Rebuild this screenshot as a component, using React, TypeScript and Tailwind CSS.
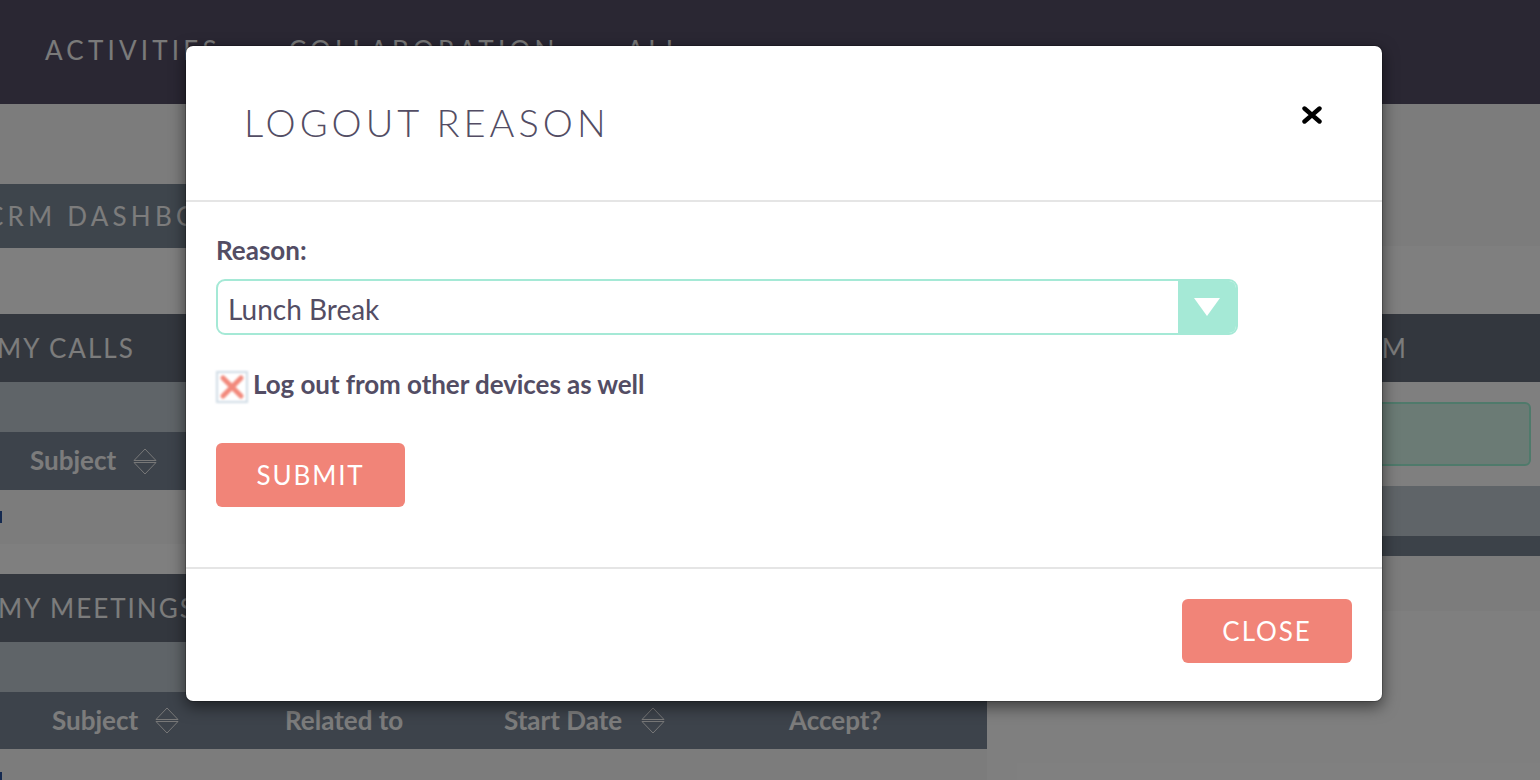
function SortIcon() {
  return (
    <svg width="24" height="27" viewBox="0 0 24 27" fill="none" stroke="#f0f0f0" strokeWidth="1" className="shrink-0">
      <path d="M12 1 L23 12.5 L1 12.5 Z" />
      <path d="M1 14.5 L23 14.5 L12 26 Z" />
    </svg>
  );
}

function SectionBar({ label, className }: { label: string; className: string }) {
  return (
    <div className={`flex items-center whitespace-nowrap text-[26px] text-[#f8f8f8] ${className}`}>
      {label}
    </div>
  );
}

export default function App() {
  return (
    <div className="relative flex h-[780px] flex-col overflow-hidden bg-white font-[Lato,sans-serif]">
      {/* page behind the dialog */}
      <nav className="flex h-[104px] shrink-0 gap-[68px] bg-[#544e66] pl-[45px] pt-[31px] text-[26px] leading-[38px] tracking-[4.2px] text-[#f5f5f5]">
        <span>ACTIVITIES</span>
        <span>COLLABORATION</span>
        <span>ALL</span>
      </nav>

      <div className="flex flex-1">
        <div className="flex w-[987px] shrink-0 flex-col">
          <div className="h-[80px] bg-[#f8f8f8]" />
          <SectionBar label="CRM DASHBOARD" className="h-[64px] w-[800px] bg-[#7c8a98] -indent-[14px] tracking-[4.2px]" />
          <div className="h-[66px]" />
          <SectionBar label="MY CALLS" className="h-[68px] bg-[#666e7c] -indent-[3px] tracking-[2px]" />
          <div className="h-[50px] bg-[#bec8d0]" />
          <div className="flex h-[58px] items-center gap-[17px] bg-[#7a8696] pl-[30px] text-[26px] font-bold text-[#f8f8f8]">
            <span className="-mt-[2px]">Subject</span>
            <SortIcon />
          </div>
          <div className="flex h-[54px] items-center bg-[#f8f8f8]">
            <span className="h-[12px] w-[2px] bg-[#2a55a0]" />
          </div>
          <div className="h-[30px]" />
          <SectionBar label="MY MEETINGS" className="h-[68px] bg-[#666e7c] -indent-[2px] tracking-[2px]" />
          <div className="h-[50px] bg-[#bec8d0]" />
          <div className="flex h-[57px] items-center bg-[#7a8696] text-[26px] font-bold text-[#f8f8f8]">
            <div className="flex w-[285px] items-center gap-[17px] pl-[52px]">
              <span>Subject</span>
              <SortIcon />
            </div>
            <div className="w-[219px]">Related to</div>
            <div className="flex w-[285px] items-center gap-[19px]">
              <span>Start Date</span>
              <SortIcon />
            </div>
            <div>Accept?</div>
          </div>
          <div className="flex-1 bg-[#f8f8f8] pt-[23px]">
            <div className="h-[8px] w-[2px] bg-[#2a55a0]" />
          </div>
        </div>

        <div className="ml-[18px] flex flex-1 flex-col">
          <div className="h-[142px] bg-[#f8f8f8]" />
          <div className="h-[68px]" />
          <SectionBar label="FORM" className="h-[68px] justify-end bg-[#666e7c] pr-[132px] tracking-[2px]" />
          <div className="h-[104px] pr-[9px] pt-[20px]">
            <div className="h-[64px] rounded-[6px] border-2 border-[#9ef4d6] bg-[#d6f6ea]" />
          </div>
          <div className="h-[50px] bg-[#bec8d0]" />
          <div className="h-[20px] bg-[#788492]" />
          <div className="h-[55px] bg-[#f8f8f8]" />
        </div>
      </div>

      {/* backdrop */}
      <div className="absolute inset-0 bg-black/50" />

      {/* logout dialog */}
      <div className="absolute left-[185px] top-[45px] flex h-[657px] w-[1198px] flex-col rounded-lg border border-black/20 bg-white bg-clip-padding shadow-[0_5px_15px_rgba(0,0,0,0.5)]">
        <div className="flex h-[156px] shrink-0 items-start justify-between border-b-2 border-[#e5e5e5] pl-[58px] pr-[60px]">
          <h4 className="mt-[52px] text-[38px] font-light leading-[48px] tracking-[4px] text-[#534d64]">LOGOUT REASON</h4>
          <button className="mt-[60px]">
            <svg width="20" height="18" viewBox="0 0 20 18" stroke="#000" strokeWidth="4.4" strokeLinecap="round">
              <path d="M2.5 2.5 L17.5 15.5 M17.5 2.5 L2.5 15.5" />
            </svg>
          </button>
        </div>

        <div className="flex h-[367px] shrink-0 flex-col border-b-2 border-[#e5e5e5] pl-[30px]">
          <label className="mt-[31px] text-[26px] font-bold leading-[34px] text-[#534d64]">Reason:</label>
          <div className="mt-[12px] flex h-[56px] w-[1022px] overflow-hidden rounded-[9px] border-2 border-[#a5e9d6]">
            <div className="flex-1 pl-[10px] text-[28px] leading-[56px] text-[#534d64]">Lunch Break</div>
            <div className="flex w-[58px] items-center justify-center bg-[#a5e9d6]">
              <svg width="26" height="18" viewBox="0 0 26 18" fill="#fff">
                <path d="M0 0 H26 L13 18 Z" />
              </svg>
            </div>
          </div>
          <div className="mt-[36px] flex items-center gap-[5px]">
            <span className="flex h-[32px] w-[32px] items-center justify-center border-2 border-[#d0dce6] bg-white blur-[0.8px]">
              <svg width="28" height="28" viewBox="0 0 28 28" stroke="#f2897c" strokeWidth="5" strokeLinecap="round">
                <path d="M5 5 L23 23 M23 5 L5 23" />
              </svg>
            </span>
            <span className="-mt-[6px] text-[26px] font-bold leading-[34px] tracking-[-0.07px] text-[#534d64]">Log out from other devices as well</span>
          </div>
          <button className="mt-[40px] h-[64px] w-[189px] rounded-[6px] bg-[#f18478] text-[26px] tracking-[1.9px] text-white">SUBMIT</button>
        </div>

        <div className="flex flex-1 justify-end pr-[30px] pt-[30px]">
          <button className="h-[64px] w-[170px] rounded-[6px] bg-[#f18478] text-[26px] tracking-[1.9px] text-white">CLOSE</button>
        </div>
      </div>
    </div>
  );
}
